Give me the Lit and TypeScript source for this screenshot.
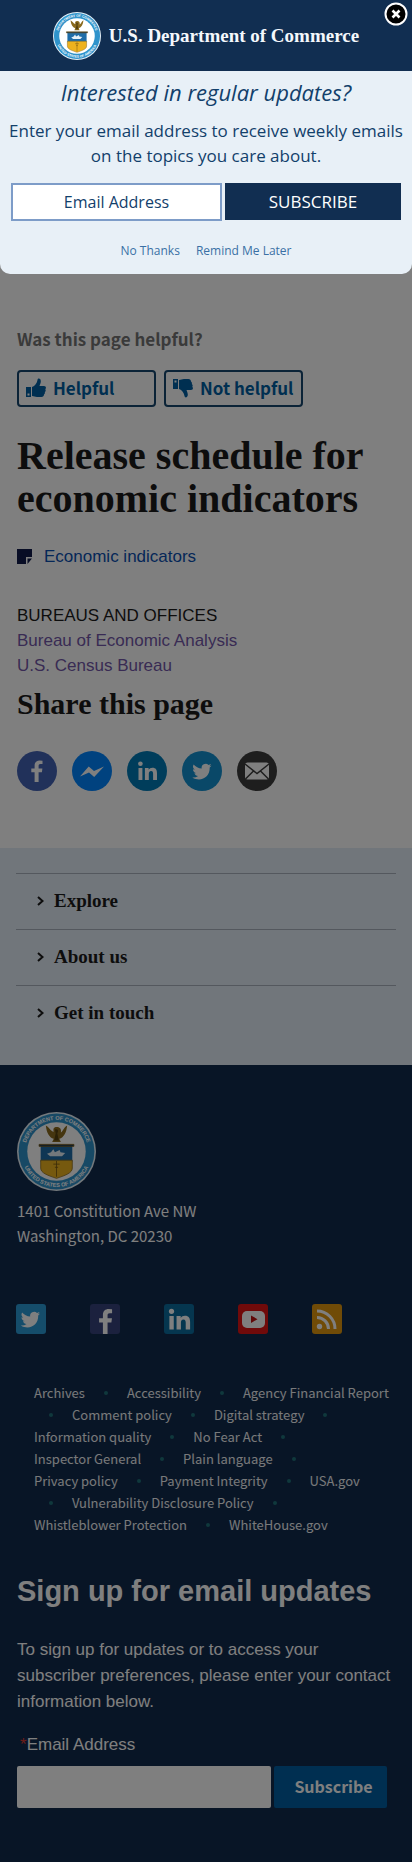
import { LitElement, html, css, svg, nothing } from "lit";
import { customElement, property } from "lit/decorators.js";

const FACEBOOK = svg`<path d="M21.6 31V21.2h3.3l.5-3.8h-3.8V15c0-1.1.4-1.9 1.9-1.9h2V9.700q-1.2-.2-2.900-.2c-3 0-5 1.800-5 5.100v2.800h-3.300v3.800h3.300V31z"/>`;
const BIRD = svg`<path d="M29.500 14.600c-.7.3-1.500.5-2.200.6.8-.5 1.400-1.200 1.700-2.100-.8.400-1.600.8-2.500.900a4 4 0 0 0-6.800 3.600c-3.200-.2-6.100-1.700-8.100-4.100a4 4 0 0 0 1.200 5.200c-.6 0-1.200-.2-1.800-.500 0 2 1.400 3.600 3.200 3.900-.6.2-1.200.2-1.800.1.500 1.600 1.900 2.700 3.700 2.700a8 8 0 0 1-5.800 1.600c8 5 17.800.2 17.400-9.900.8-.500 1.400-1.200 1.800-2z"/>`;
const LINKEDIN = svg`<path d="M11.500 17h3.900v12h-3.900zM17.900 17h3.700v1.700c.8-1.300 2.100-2 3.800-2 3.500 0 4.600 2.100 4.600 5.700V29h-3.900v-5.900c0-1.900-.4-3-2-3-1.800 0-2.300 1.300-2.300 3.100V29h-3.900z"/><circle cx="13.400" cy="12.800" r="2.300"/>`;

@customElement("commerce-seal")
export class CommerceSeal extends LitElement {
  static styles = css`
    :host { display: block; }
    svg { display: block; width: 100%; height: 100%; }
    .ring { font: bold 7px "Liberation Sans", sans-serif; fill: #fff; text-anchor: middle; }
  `;

  render() {
    return html`
      <svg viewBox="0 0 100 100" role="img" aria-label="Department of Commerce seal">
        <defs>
          <path id="upper" d="M10 50a40 40 0 0 1 80 0" />
          <path id="lower" d="M5 50a45 45 0 0 0 90 0" />
        </defs>
        <circle cx="50" cy="50" r="50" fill="#e6f1f8" />
        <circle cx="50" cy="50" r="48" fill="#2f93cb" />
        <circle cx="50" cy="50" r="37" fill="#fff" />
        <text class="ring"><textPath href="#upper" startOffset="50%">DEPARTMENT OF COMMERCE</textPath></text>
        <text class="ring"><textPath href="#lower" startOffset="50%">UNITED STATES OF AMERICA</textPath></text>
        <path d="M36.500 17c1 9 4 15 10 17l-2 4h11l-2-4c6-2 9-8 10-17-4 2-5 7-8 9 1-4-1-7-5-7s-5 2-4 6c-4-1-6-6-10-8z" fill="#8a6a1e" />
        <path d="M48 22c4-1 5 2 3 5l2 9h-6l2-9z" fill="#54400f" />
        <path d="M30 42h40v21H30z" fill="#1f6da8" />
        <path d="M30 61h40v10c0 6-8 9-20 13-12-4-20-7-20-13z" fill="#edb21e" />
        <path d="M30 61h40v10c0 6-8 9-20 13-12-4-20-7-20-13z" fill="none" stroke="#8a6a1e" />
        <path d="M28 41h44v2.500H28zM50 62v20M46 66h8M48 70h4" fill="#243c4e" stroke="#755510" />
        <path d="M38 53l5-2 3-4 2 4 6-3 1 3 6 1-4 4H42z" fill="#e6f1f8" />
      </svg>
    `;
  }
}

@customElement("updates-dialog")
export class UpdatesDialog extends LitElement {
  static styles = css`
    :host { display: block; position: relative; z-index: 2; font-family: "Open Sans", sans-serif; color: #12406b; text-align: center; }
    .brand { display: flex; align-items: center; justify-content: center; gap: 8px; padding: 12px 0 11px; background: #112e51; }
    .brand commerce-seal { width: 48px; height: 48px; }
    .name { font: bold 19px/28px "Liberation Serif", serif; color: #f4f8fc; }
    .close { position: absolute; top: 2px; right: 4px; width: 24px; height: 24px; padding: 0; border: 0; background: none; }
    .close svg { display: block; width: 24px; height: 24px; }
    .panel { padding: 6px 11px 12px; background: #e8f0f7; border-radius: 0 0 10px 10px; }
    h2 { margin: 0; font-size: 22px; font-weight: 400; font-style: italic; line-height: 30px; }
    p { margin: 11px -4px 15px; font-size: 17px; line-height: 25px; }
    .row { display: grid; grid-template-columns: 211fr 176fr; gap: 3px; align-items: start; }
    input, .send { box-sizing: border-box; min-width: 0; height: 38px; margin: 0; font: 16px/24px "Open Sans", sans-serif; text-align: center; border-radius: 0; }
    input { border: 2px solid #7d9cc8; background: #fff; color: #12406b; }
    input::placeholder { color: #12406b; opacity: 1; }
    .send { height: 37px; border: 0; background: #112e51; color: #fff; font-size: 17px; }
    .choices { display: flex; justify-content: center; gap: 16px; margin-top: 20px; padding-bottom: 1px; font-size: 12px; line-height: 20px; }
    a { color: #3a70a5; text-decoration: none; }
  `;

  render() {
    return html`
      <div class="brand">
        <commerce-seal></commerce-seal>
        <span class="name">U.S. Department of Commerce</span>
      </div>
      <button class="close" aria-label="Close">
        <svg viewBox="0 0 24 24">
          <circle cx="12" cy="12" r="10.500" fill="#000" stroke="#fff" stroke-width="2" />
          <path d="M8.500 8.500l7 7m0-7l-7 7" stroke="#fff" stroke-width="2.600" />
        </svg>
      </button>
      <div class="panel">
        <h2>Interested in regular updates?</h2>
        <p>Enter your email address to receive weekly emails on the topics you care about.</p>
        <div class="row">
          <input type="email" aria-label="Email Address" placeholder="Email Address" />
          <button class="send">SUBSCRIBE</button>
        </div>
        <div class="choices"><a href="#no">No Thanks</a><a href="#later">Remind Me Later</a></div>
      </div>
    `;
  }
}

@customElement("page-content")
export class PageContent extends LitElement {
  static styles = css`
    :host { display: block; padding: 53px 17px 57px; font: 17px/25px "Liberation Sans", sans-serif; color: #1b1b1b; }
    a { text-decoration: none; color: #0a4fb0; }
    .ask { margin: 0; font: bold 17px/24px "Noto Sans CJK SC", sans-serif; color: #757575; }
    .votes { display: flex; gap: 8px; margin-top: 19px; }
    .votes button { display: flex; align-items: center; gap: 7px; box-sizing: border-box; width: 139px; height: 37px; padding: 0 7px 2px; border: 2px solid #17466f; border-radius: 4px; background: none; font: bold 17px/24px "Noto Sans CJK SC", sans-serif; color: #005ea2; white-space: nowrap; }
    .votes svg { flex: none; width: 20px; height: 20px; fill: #005ea2; }
    h1, h2 { margin: 0; font-family: "Liberation Serif", serif; font-weight: bold; }
    h1 { margin-top: 27px; font-size: 40px; line-height: 43px; }
    .topic { display: flex; align-items: center; gap: 12px; margin-top: 24px; }
    .topic svg { width: 15px; height: 15px; }
    .bureaus { display: grid; margin-top: 34px; }
    .bureaus a { color: #7257a8; }
    h2 { margin-top: 9px; font-size: 30px; line-height: 34px; }
    .share { display: flex; gap: 15px; margin-top: 30px; }
    .share a, .share svg { display: block; width: 40px; height: 40px; }
    .share svg { fill: #fff; }
  `;

  private circle(name: string, color: string, glyph: unknown) {
    return html`<a href="#${name}" aria-label=${name}>
      <svg viewBox="0 0 40 40"><circle cx="20" cy="20" r="20" fill=${color} />${glyph}</svg>
    </a>`;
  }

  private thumb(down: boolean) {
    return html`<svg viewBox="0 0 20 20">
      <g transform=${down ? "matrix(1 0 0 -1 0 20)" : nothing}>
        <path fill-rule="evenodd" d="M0 9h5v10H0zM1.500 15.500v2h2v-2zM6 9c3-1 5-4 5.500-7 .2-2 3-2 3.300 1 .1 2-.8 3.500-1.300 5H18c2 0 2.500 2 1.300 3.200.7 1 .4 2.300-.5 2.800.4 1 0 2-.8 2.500C18 18 17 19 15.500 19H11c-2 0-3-1-5-1z" />
      </g>
    </svg>`;
  }

  render() {
    return html`
      <p class="ask">Was this page helpful?</p>
      <div class="votes">
        <button>${this.thumb(false)}Helpful</button>
        <button>${this.thumb(true)}Not helpful</button>
      </div>
      <h1>Release schedule for economic indicators</h1>
      <div class="topic">
        <svg viewBox="0 0 15 15"><path d="M0 0h15v8H9v7H0zM15 9.500L10.500 15V9.500z" fill="#111a4a" /></svg>
        <a href="#topic">Economic indicators</a>
      </div>
      <div class="bureaus">
        <span>BUREAUS AND OFFICES</span>
        <a href="#bea">Bureau of Economic Analysis</a>
        <a href="#census">U.S. Census Bureau</a>
      </div>
      <h2>Share this page</h2>
      <div class="share">
        ${this.circle("facebook", "#4362b4", FACEBOOK)}
        ${this.circle("messenger", "#0084ff", svg`<path d="M8 25.500l8.700-10 5.300 4.500 10-4.500-9.800 10.500-5.200-4.600z"/>`)}
        ${this.circle("linkedin", "#007bb6", LINKEDIN)}
        ${this.circle("twitter", "#1290d0", BIRD)}
        ${this.circle("email", "#3c3c3c", svg`<rect x="8" y="11.500" width="24" height="17" rx="2.500"/><path d="M8 13l12 9.500L32 13M8.500 28l8-8M31.500 28l-8-8" fill="none" stroke="#3c3c3c" stroke-width="1.500"/>`)}
      </div>
    `;
  }
}

@customElement("page-menu")
export class PageMenu extends LitElement {
  @property({ attribute: false }) items = ["Explore", "About us", "Get in touch"];

  static styles = css`
    :host { display: block; padding: 25px 16px 24px; background: #e3ecf6; }
    a { display: flex; align-items: center; gap: 9px; box-sizing: border-box; height: 56px; padding: 0 0 2px 20px; border-top: 1px solid #a9b0bc; font: bold 19px/24px "Liberation Serif", serif; color: #1b1b1b; text-decoration: none; }
    svg { width: 9px; height: 12px; fill: none; stroke: #1b1b1b; stroke-width: 2; }
  `;

  render() {
    return html`<nav>
      ${this.items.map((item) => html`<a href="#menu"><svg viewBox="0 0 9 12"><path d="M2 2l4.500 4L2 10" /></svg>${item}</a>`)}
    </nav>`;
  }
}

@customElement("page-footer")
export class PageFooter extends LitElement {
  @property({ attribute: false }) links = [
    "Archives", "Accessibility", "Agency Financial Report", "Comment policy", "Digital strategy",
    "Information quality", "No Fear Act", "Inspector General", "Plain language", "Privacy policy",
    "Payment Integrity", "USA.gov", "Vulnerability Disclosure Policy", "Whistleblower Protection", "WhiteHouse.gov",
  ];

  static styles = css`
    :host { display: block; padding: 47px 17px 55px; background: #112a4c; color: #fff; font-family: "Noto Sans CJK SC", sans-serif; }
    a { color: inherit; text-decoration: none; }
    commerce-seal { width: 79px; height: 79px; }
    address { margin-top: 7px; font-size: 15px; font-style: normal; line-height: 25px; }
    .social { display: flex; gap: 44px; margin: 56px 0 48px -1px; }
    .social a, .social svg { display: block; width: 30px; height: 30px; }
    .social svg { fill: #fff; }
    .links { display: flex; flex-wrap: wrap; column-gap: 4px; padding-left: 17px; font-size: 13px; line-height: 22px; color: #f0f2f5; }
    .dot { display: grid; place-items: center; width: 34px; }
    .dot::before { content: ""; width: 4px; height: 4px; border-radius: 2px; background: #1f7078; }
    .signup { margin-top: 37px; font: 17px/26px "Liberation Sans", sans-serif; }
    h2 { margin: 0; font-size: 29px; line-height: 36px; }
    p { margin: 28px 0 17px; }
    .star { padding-left: 3px; color: #d83933; }
    .row { display: grid; grid-template-columns: 254fr 113fr; gap: 3px; margin: 8px 8px 0 0; }
    input, button { box-sizing: border-box; min-width: 0; height: 42px; margin: 0; border-radius: 2px; border: 0; }
    input { background: #fff; }
    button { background: #005ea2; color: #fff; font: bold 16px/24px "Noto Sans CJK SC", sans-serif; padding: 0 0 2px 6px; }
  `;

  private tile(name: string, color: string, glyph: unknown) {
    return html`<a href="#${name}" aria-label=${name}>
      <svg viewBox="0 0 30 30"><rect width="30" height="30" rx="3" fill=${color} />${glyph}</svg>
    </a>`;
  }

  render() {
    return html`
      <commerce-seal></commerce-seal>
      <address>1401 Constitution Ave NW<br />Washington, DC 20230</address>
      <div class="social">
        ${this.tile("twitter", "#2a9ad6", svg`<g transform="translate(-5.500 -5)">${BIRD}</g>`)}
        ${this.tile("facebook", "#36427c", svg`<g transform="translate(-7.500 -6) scale(1.160)">${FACEBOOK}</g>`)}
        ${this.tile("linkedin", "#0b6d9f", svg`<g transform="translate(-7.500 -7) scale(1.120)">${LINKEDIN}</g>`)}
        ${this.tile("youtube", "#e01414", svg`<rect x="4" y="7" width="23" height="17" rx="5"/><path d="M13 11.500v7.500l6.500-3.800z" fill="#c01010"/>`)}
        ${this.tile("rss", "#e0960e", svg`<circle cx="7.500" cy="22.500" r="2.700"/><path d="M5 13.500A11.500 11.500 0 0 1 16.500 25M5 7A18 18 0 0 1 23 25" fill="none" stroke="#fff" stroke-width="3"/>`)}
      </div>
      <nav class="links">
        ${this.links.map((link, i) => html`${i ? html`<span class="dot" aria-hidden="true"></span>` : nothing}<a href="#link">${link}</a>`)}
      </nav>
      <form class="signup">
        <h2>Sign up for email updates</h2>
        <p>To sign up for updates or to access your subscriber preferences, please enter your contact information below.</p>
        <label for="email"><span class="star">*</span>Email Address</label>
        <div class="row">
          <input id="email" type="email" />
          <button type="button">Subscribe</button>
        </div>
      </form>
    `;
  }
}

@customElement("app-root")
export class AppRoot extends LitElement {
  static styles = css`
    :host { display: block; position: relative; min-height: 100vh; background: #fff; }
    .shade { position: absolute; inset: 0; z-index: 1; background: rgba(0, 0, 0, 0.5); }
  `;

  render() {
    return html`
      <updates-dialog></updates-dialog>
      <page-content></page-content>
      <page-menu></page-menu>
      <page-footer></page-footer>
      <div class="shade"></div>
    `;
  }
}
